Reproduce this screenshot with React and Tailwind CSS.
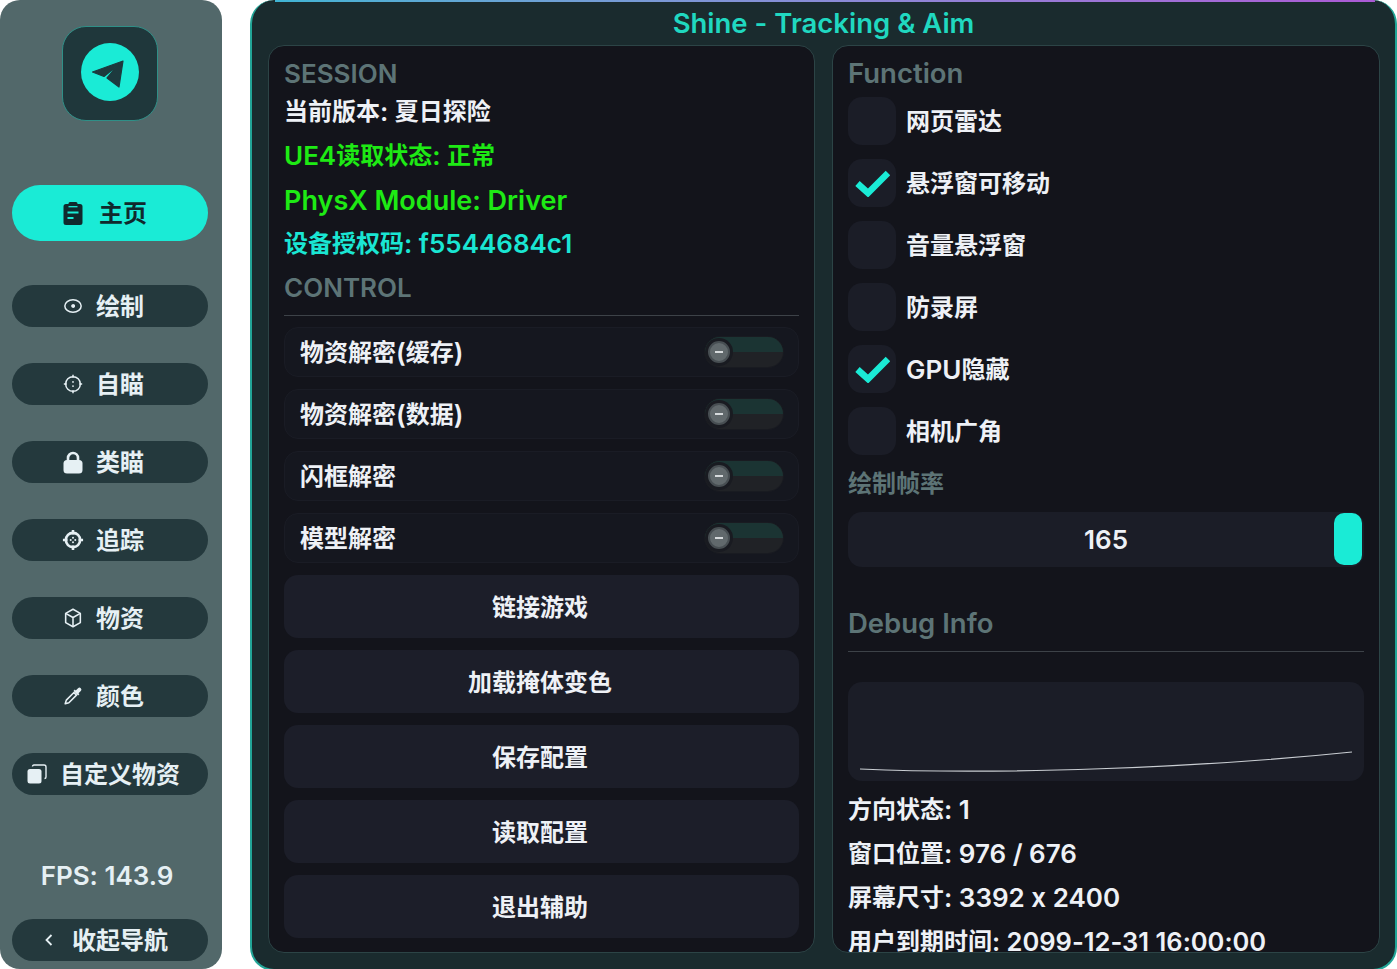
const teal = '#1aebd6';

function Svg({ children, size = 20, className = '' }) {
  return (
    <svg width={size} height={size} viewBox="0 0 24 24" fill="none" className={className}>
      {children}
    </svg>
  );
}

const icons = {
  home: (
    <svg width="20" height="25" viewBox="0 0 20 25" fill="none">
      <path d="M3 3h2.500V2.500Q5.500 1 7 1h6q1.500 0 1.500 1.500V3H17q2.500 0 2.500 2.500v16q0 2.500-2.500 2.500H3q-2.500 0-2.500-2.500v-16Q.5 3 3 3z" fill="#10292d" />
      <path d="M5.500 5.700h9" stroke="#1aebd6" strokeWidth="1.300" />
      <path d="M4.500 11.500h11M4.500 17h6" stroke="#1aebd6" strokeWidth="2" />
    </svg>
  ),
  eye: (
    <Svg>
      <ellipse cx="12" cy="12" rx="9.800" ry="7.500" stroke="#e6f0f4" strokeWidth="1.800" />
      <path d="M8.500 12h2a2 2 0 1 0 0-.1z" fill="#e6f0f4" />
      <circle cx="12" cy="12" r="2.200" fill="#e6f0f4" />
    </Svg>
  ),
  aim: (
    <Svg>
      <circle cx="12" cy="12" r="8.800" stroke="#e6f0f4" strokeWidth="1.800" />
      <path d="M12 1v3.500M12 19.500V23M1 12h3.500M19.500 12H23" stroke="#e6f0f4" strokeWidth="1.800" />
      <circle cx="12" cy="9.500" r="1.100" fill="#e6f0f4" />
      <circle cx="12" cy="14.500" r="1.100" fill="#e6f0f4" />
    </Svg>
  ),
  lock: (
    <svg width="20" height="23" viewBox="0 0 20 23" fill="none">
      <path d="M5 10V7a5 5 0 0 1 10 0v3" stroke="#e6f0f4" strokeWidth="2.600" />
      <rect x="0.500" y="9" width="19" height="13.500" rx="3.500" fill="#e6f0f4" />
    </svg>
  ),
  track: (
    <Svg size={22}>
      <circle cx="12" cy="12" r="7.800" stroke="#e6f0f4" strokeWidth="2.800" />
      <path d="M12 1v5M12 18v5M1 12h5M18 12h5" stroke="#e6f0f4" strokeWidth="2.800" />
      <circle cx="12" cy="9.500" r="1.100" fill="#e6f0f4" />
      <circle cx="12" cy="14.500" r="1.100" fill="#e6f0f4" />
      <circle cx="9.500" cy="12" r="1.100" fill="#e6f0f4" />
      <circle cx="14.500" cy="12" r="1.100" fill="#e6f0f4" />
    </Svg>
  ),
  box: (
    <Svg size={22}>
      <path d="M12 2.500l8 4.500v10l-8 4.500L4 17V7z" stroke="#e6f0f4" strokeWidth="1.700" strokeLinejoin="round" />
      <path d="M4 7l8 4.500L20 7M12 11.500v10" stroke="#e6f0f4" strokeWidth="1.700" />
    </Svg>
  ),
  dropper: (
    <Svg size={22}>
      <path d="M3.500 20.500l1.200-4 8.300-8.300 2.800 2.800-8.300 8.300z" stroke="#e6f0f4" strokeWidth="1.700" strokeLinejoin="round" />
      <path d="M12.500 6.500l5 5 1.500-1.500-1-1 2.500-2.500a2.100 2.100 0 0 0-3-3L15 6l-1-1z" fill="#e6f0f4" />
    </Svg>
  ),
  copy: (
    <svg width="20" height="20" viewBox="0 0 20 20" fill="none">
      <rect x="0.500" y="5" width="14" height="14.500" rx="2.500" fill="#e6f0f4" />
      <path d="M5.500 2.500q0-1.500 1.500-1.500h10q2 0 2 2v10q0 1.500-1.500 1.500" stroke="#e6f0f4" strokeWidth="1.400" />
    </svg>
  ),
  chevron: (
    <svg width="10" height="14" viewBox="0 0 10 14" fill="none">
      <path d="M7.500 2L2.500 7l5 5" stroke="#e6f0f4" strokeWidth="1.800" />
    </svg>
  ),
};

// CJK runs sit at 24px while Latin runs use the size set on the parent.
function Mixed({ text }) {
  const parts = text.split(/([\u4e00-\u9fff]+)/).filter(Boolean);
  return parts.map((p, i) =>
    /[\u4e00-\u9fff]/.test(p) ? (
      <span key={i} className="text-[24px] font-bold">{p}</span>
    ) : (
      <span key={i} className="whitespace-pre">{p}</span>
    ),
  );
}

const nav = [
  { label: '绘制', icon: icons.eye, pad: 'pr-[14px]', gap: 'gap-[12px]' },
  { label: '自瞄', icon: icons.aim, pad: 'pr-[14px]', gap: 'gap-[12px]' },
  { label: '类瞄', icon: icons.lock, pad: 'pr-[14px]', gap: 'gap-[12px]' },
  { label: '追踪', icon: icons.track, pad: 'pr-[14px]', gap: 'gap-[12px]' },
  { label: '物资', icon: icons.box, pad: 'pr-[14px]', gap: 'gap-[12px]' },
  { label: '颜色', icon: icons.dropper, pad: 'pr-[14px]', gap: 'gap-[12px]' },
  { label: '自定义物资', icon: icons.copy, pad: 'pr-[14px]', gap: 'gap-[12px]' },
];

function Pill({ item }) {
  return (
    <div className={`flex h-[42px] items-center justify-center ${item.gap} ${item.pad} rounded-full bg-[#24393d] text-[24px] leading-none font-bold text-[#e6f0f4]`}>
      <span className="flex w-[22px] justify-center">{item.icon}</span>
      <span className="pt-[2px]">{item.label}</span>
    </div>
  );
}

function Sidebar() {
  return (
    <aside className="flex h-full w-[222px] shrink-0 flex-col rounded-[20px] bg-[#52686a] pr-[14px] pl-[12px]">
      <div className="mt-[26px] ml-[50px] flex h-[95px] w-[96px] items-center justify-center rounded-[24px] border border-[#2f8f87] bg-[#1f373b] pb-[4px]">
        <svg width="60" height="60" viewBox="0 0 60 60" fill="none">
          <circle cx="30" cy="30" r="29" fill={teal} />
          <path d="M43 19L12.500 30l11.500 4.500L38 23 27 36l12 9z" fill="#1d3a3e" strokeLinejoin="round" stroke="#1d3a3e" strokeWidth="1.200" />
        </svg>
      </div>
      <div className="mt-[64px] flex h-[56px] items-center justify-center gap-[16px] rounded-full bg-[#1aebd6] pr-[10px] text-[24px] leading-none font-bold text-[#10292d]">
        {icons.home}
        <span className="pt-[2px]">主页</span>
      </div>
      <div className="mt-[44px] flex flex-col gap-[36px]">
        {nav.map((item) => (
          <Pill key={item.label} item={item} />
        ))}
      </div>
      <div className="mt-[60px] pt-[2px] pr-[6px] text-center text-[26px] leading-[38px] font-semibold text-[#e6f0f4]">FPS: 143.9</div>
      <div className="mt-[24px] flex h-[42px] items-center justify-center gap-[18px] rounded-full bg-[#24393d] pr-[8px] text-[24px] leading-none font-bold text-[#e6f0f4]">
        {icons.chevron}
        <span className="pt-[2px]">收起导航</span>
      </div>
    </aside>
  );
}

function TextLine({ text, color = 'text-[#eef1f6]', size = 'text-[26px]' }) {
  return (
    <div className={`flex h-[44px] items-center ${size} leading-none font-semibold whitespace-pre ${color}`}>
      <Mixed text={text} />
    </div>
  );
}

function Heading({ children, size = 'text-[26px]' }) {
  return <div className={`flex h-[32px] items-center ${size} leading-none font-semibold text-[#5d7476]`}>{children}</div>;
}

function ToggleRow({ label }) {
  return (
    <div className="flex h-[50px] items-center justify-between rounded-[14px] border border-[#1a1c25] bg-[#15171f] px-[15px] text-[26px] leading-none font-semibold text-[#eef1f6]">
      <span className="flex items-center whitespace-pre pt-[2px]"><Mixed text={label} /></span>
      <div className="relative h-[30px] w-[78px] overflow-hidden rounded-full bg-[#202226] shadow-[0_0_0_1px_#191b21]">
        <div className="h-[15px] w-full bg-[#1b3433]" />
        <div className="absolute top-[4px] left-[3px] flex h-[22px] w-[22px] items-center justify-center rounded-full border-2 border-[#474e52] bg-[#61696c] shadow-[0_0_0_3px_#191b21]">
          <div className="h-[2px] w-[8px] bg-[#d6dadc]" />
        </div>
      </div>
    </div>
  );
}

function ActionButton({ label }) {
  return (
    <div className="flex h-[63px] items-center justify-center rounded-[14px] bg-[#1c1e29] pt-[2px] pr-[3px] text-[24px] leading-none font-bold text-[#eef1f6]">
      {label}
    </div>
  );
}

function LeftPanel() {
  return (
    <section className="h-full w-[547px] rounded-[16px] border border-[#2c4446] bg-[#13141b] px-[15px] pt-[12px]">
      <Heading>SESSION</Heading>
      <TextLine text="当前版本: 夏日探险" />
      <TextLine text="UE4读取状态: 正常" color="text-[#1eea14]" />
      <TextLine text="PhysX Module: Driver" color="text-[#1eea14]" size="text-[27px]" />
      <TextLine text="设备授权码: f5544684c1" color="text-[#1ae6d3]" />
      <div className="flex h-[44px] items-center text-[26px] leading-none font-semibold text-[#5d7476]">CONTROL</div>
      <div className="mt-[5px] h-px bg-[#3d4248]" />
      <div className="mt-[11px] flex flex-col gap-[12px]">
        {['物资解密(缓存)', '物资解密(数据)', '闪框解密', '模型解密'].map((l) => (
          <ToggleRow key={l} label={l} />
        ))}
        {['链接游戏', '加载掩体变色', '保存配置', '读取配置', '退出辅助'].map((l) => (
          <ActionButton key={l} label={l} />
        ))}
      </div>
    </section>
  );
}

function CheckRow({ label, checked }) {
  return (
    <div className="flex h-[48px] items-center gap-[10px] text-[26px] leading-none font-semibold text-[#eef1f6]">
      <div className="flex h-[48px] w-[48px] items-center justify-center rounded-[14px] bg-[#1b1d27]">
        {checked && (
          <svg width="36" height="28" viewBox="0 0 36 28" fill="none">
            <path d="M3.500 14.500L14 24 34 4" stroke={teal} strokeWidth="6.500" />
          </svg>
        )}
      </div>
      <span className="flex items-center whitespace-pre pt-px"><Mixed text={label} /></span>
    </div>
  );
}

function RightPanel() {
  const checks = [
    ['网页雷达', false],
    ['悬浮窗可移动', true],
    ['音量悬浮窗', false],
    ['防录屏', false],
    ['GPU隐藏', true],
    ['相机广角', false],
  ];
  return (
    <section className="h-full w-[548px] overflow-hidden rounded-[16px] border border-[#2c4446] bg-[#13141b] px-[15px] pt-[12px]">
      <Heading size="text-[27.500px]">Function</Heading>
      <div className="mt-[7px] flex flex-col gap-[14px]">
        {checks.map(([l, c]) => (
          <CheckRow key={l} label={l} checked={c} />
        ))}
      </div>
      <div className="mt-[13px] flex h-[32px] items-center text-[24px] leading-none font-bold text-[#5d7476]">绘制帧率</div>
      <div className="relative mt-[12px] flex h-[55px] items-center justify-center rounded-[14px] bg-[#1b1d27] text-[26px] leading-none font-semibold text-[#eef1f6]">
        165
        <div className="absolute top-[1px] right-[2px] h-[52px] w-[28px] rounded-[10px] bg-[#1aebd6]" />
      </div>
      <div className="mt-[41px]">
        <Heading size="text-[27.500px]">Debug Info</Heading>
      </div>
      <div className="mt-[11px] h-px bg-[#3d4248]" />
      <div className="mt-[30px] h-[99px] rounded-[14px] bg-[#1b1d27]">
        <svg width="516" height="99" viewBox="0 0 516 99" fill="none">
          <path d="M12 87C150 93 350 86 504 70" stroke="#c9cdd2" strokeWidth="1.200" />
        </svg>
      </div>
      <div className="mt-[7px]">
        <TextLine text="方向状态: 1" />
        <TextLine text="窗口位置: 976 / 676" />
        <TextLine text="屏幕尺寸: 3392 x 2400" />
        <TextLine text="用户到期时间: 2099-12-31 16:00:00" size="text-[25.500px]" />
      </div>
    </section>
  );
}

function Main() {
  return (
    <main className="relative ml-[28px] flex h-[971px] min-w-0 flex-1 flex-col overflow-hidden rounded-[24px] border-x-2 border-b-2 border-[#22a597] bg-[#1a2b2e]">
      <div className="absolute top-0 right-[20px] left-[23px] h-[2px] bg-gradient-to-r from-[#3fb4d4] to-[#ab5ad6]" />
      <h1 className="flex h-[45px] shrink-0 items-center justify-center pt-[3px] text-[27.500px] leading-none font-semibold text-[#20d8c0]">
        Shine - Tracking &amp; Aim
      </h1>
      <div className="flex h-[908px] gap-[17px] pl-[16px]">
        <LeftPanel />
        <RightPanel />
      </div>
    </main>
  );
}

export default function App() {
  return (
    <div className="flex h-[969px] w-[1397px] items-start overflow-hidden bg-white font-['Inter','Noto_Sans_CJK_SC',sans-serif] [font-feature-settings:'calt'_0]">
      <Sidebar />
      <Main />
    </div>
  );
}
